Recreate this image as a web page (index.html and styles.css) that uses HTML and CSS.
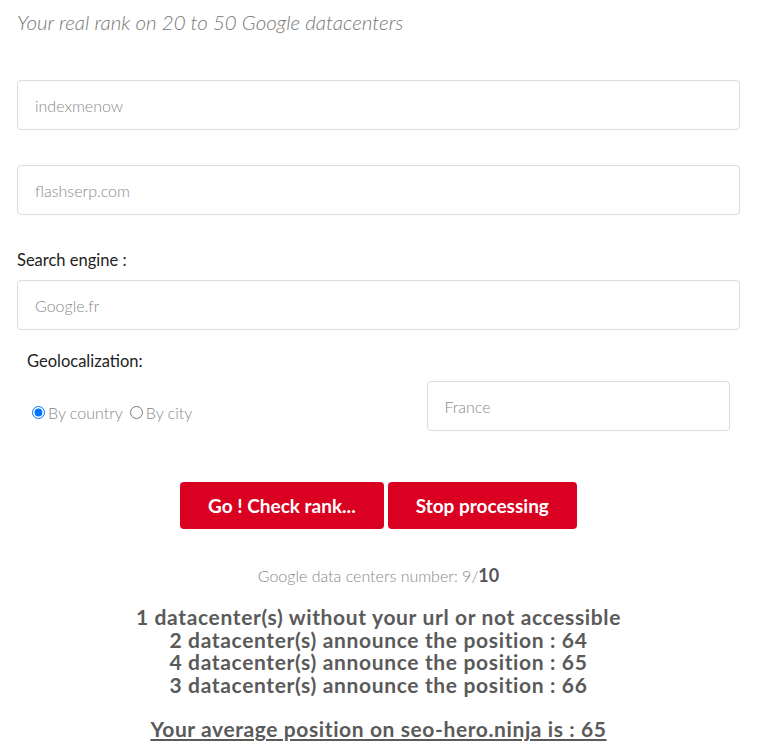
FILE: index.html
```html
<!DOCTYPE html>
<html lang="en">
<head>
<meta charset="utf-8">
<title>Rank checker</title>
<link rel="stylesheet" href="styles.css">
</head>
<body>
<main class="page">
  <p class="tagline">Your real rank on 20 to 50 Google datacenters</p>
  <form class="form">
    <div class="field first"><input class="input" type="text" placeholder="indexmenow"></div>
    <div class="field"><input class="input" type="text" placeholder="flashserp.com"></div>
    <div class="field labelled">
      <label class="label">Search engine :</label>
      <input class="input" type="text" placeholder="Google.fr">
    </div>
    <div class="geo">
      <div class="geo-left">
        <div class="geo-label">Geolocalization:</div>
        <div class="radios">
          <label class="radio"><input type="radio" name="geo" checked>By country</label>
          <label class="radio"><input type="radio" name="geo">By city</label>
        </div>
      </div>
      <div class="geo-right">
        <input class="input" type="text" placeholder="France">
      </div>
    </div>
    <div class="actions">
      <button type="button" class="btn">Go ! Check rank...</button>
      <button type="button" class="btn">Stop processing</button>
    </div>
  </form>
  <p class="count">Google data centers number: 9/<b>10</b></p>
  <div class="results">
    <div>1 datacenter(s) without your url or not accessible</div>
    <div>2 datacenter(s) announce the position : 64</div>
    <div>4 datacenter(s) announce the position : 65</div>
    <div>3 datacenter(s) announce the position : 66</div>
  </div>
  <p class="average">Your average position on seo-hero.ninja is : 65</p>
</main>
</body>
</html>
```
FILE: styles.css
```css
* { box-sizing: border-box; }
html, body { margin: 0; padding: 0; background: #fff; }
body {
  font-family: "Source Sans Pro", Lato, "Noto Sans", sans-serif;
  font-size: 16px;
  color: #222;
}
.page { padding: 0 25px 0 17px; }
.tagline {
  margin: 8px 0 0;
  font-size: 20.5px;
  font-style: italic;
  font-weight: 300;
  color: #777;
  line-height: 28px;
}
.form { display: flex; flex-direction: column; }
.field { display: flex; flex-direction: column; }
.field.first { margin-top: 44px; }
.field + .field { margin-top: 35px; }
.field.labelled { margin-top: 35px; }
.label { line-height: 20px; margin-bottom: 10px; font-size: 16.5px; color: #222; }
.input {
  height: 50px;
  width: 100%;
  border: 1px solid #dcdcdc;
  border-radius: 4px;
  padding: 0 17px;
  font-family: inherit;
  font-size: 16px;
  font-weight: 300;
  color: #555;
  background: #fff;
}
.input::placeholder { color: #8a8a8a; }
.geo {
  display: grid;
  grid-template-columns: 1fr 1fr;
  margin-top: 20px;
}
.geo-left { padding-left: 10px; }
.geo-label { line-height: 22px; font-size: 16.5px; }
.radios { display: flex; gap: 7px; margin-top: 31px; margin-left: 5px; }
.radio {
  display: flex; align-items: center;
  color: #888; font-weight: 300; font-size: 16px;
}
.radio input { margin: 0 3px 0 0; width: 13px; height: 13px; }
.geo-right { padding: 31px 10px 0 48px; }
.actions {
  display: flex; justify-content: center; gap: 4px;
  margin-top: 51px;
}
.btn {
  height: 47px;
  border: none;
  border-radius: 4px;
  background: #da0021;
  color: #fff;
  font-family: inherit;
  font-size: 19px;
  font-weight: 700;
  padding: 0 28px;
}
.count {
  margin: 35px 0 0;
  text-align: center;
  color: #888;
  font-weight: 300;
  font-size: 16px;
  line-height: 22px;
}
.count b { color: #555; font-weight: 700; font-size: 18px; }
.results {
  margin-top: 19px;
  text-align: center;
  font-weight: 700;
  font-size: 21px;
  letter-spacing: 0.65px;
  line-height: 22.5px;
  color: #5a5a5a;
}
.average {
  margin: 21px 0 0;
  text-align: center;
  font-weight: 700;
  font-size: 21px;
  letter-spacing: 0.6px;
  line-height: 24px;
  color: #5a5a5a;
  text-decoration: underline;
}
```
